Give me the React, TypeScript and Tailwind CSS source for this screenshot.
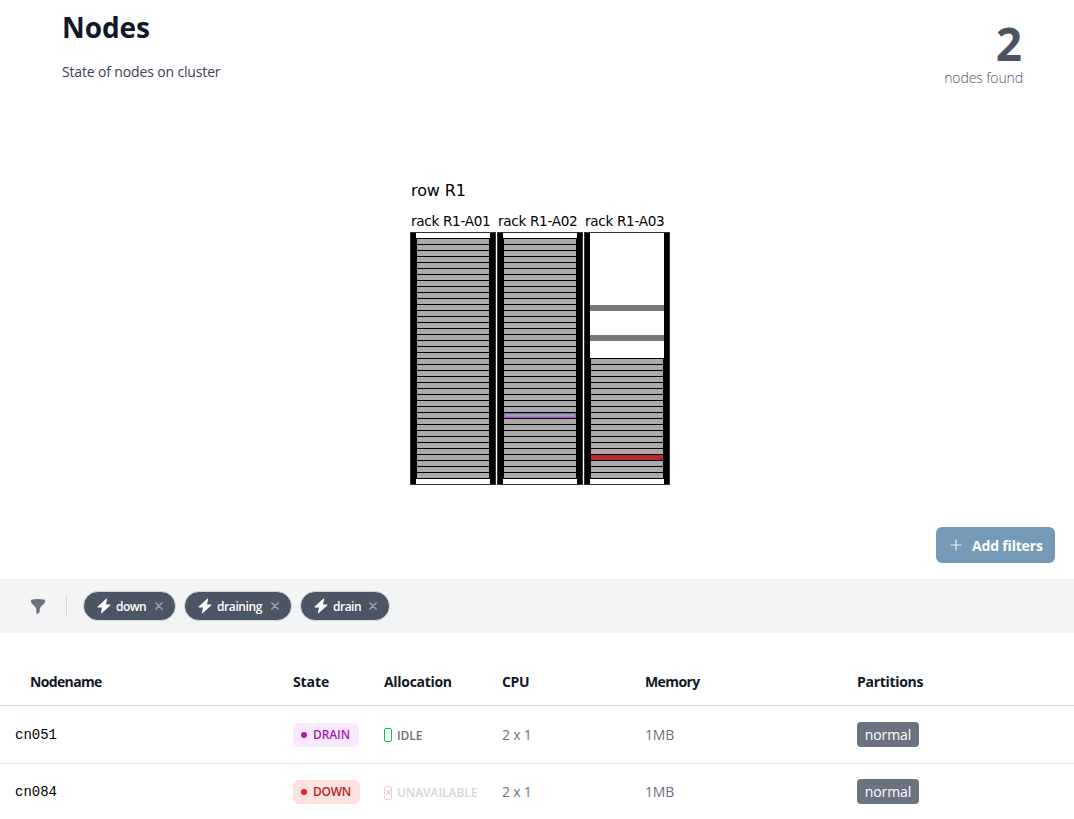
import type { ReactNode } from 'react'

const SLOT = 6

type Mark = { row: number; kind: 'drain' | 'down' }

function Rack({ nodes, marks = [], equipment = [] }: { nodes: number; marks?: Mark[]; equipment?: number[] }) {
  const first = 40 - nodes
  return (
    <svg width="86" height="253" viewBox="0 0 86 253" shapeRendering="crispEdges" className="block">
      <rect width="86" height="253" fill="#333333" />
      <rect x="1" y="1" width="84" height="251" fill="#000000" />
      <rect x="6" y="1" width="74" height="251" fill="#ffffff" />
      {equipment.map((y) => (
        <rect key={y} x="6" y={y} width="74" height="6" fill="#777777" />
      ))}
      <rect x="6" y={6 + first * SLOT} width="74" height={nodes * SLOT + 1} fill="#000000" />
      {Array.from({ length: nodes }, (_, i) => {
        const row = first + i
        const y = 7 + row * SLOT
        const mark = marks.find((m) => m.row === row)
        if (mark?.kind === 'drain') {
          return (
            <g key={row}>
              <rect x="7" y={y} width="72" height="5" fill="#b055d0" />
              <rect x="8" y={y + 1} width="70" height="3" fill="#a58bad" />
              <rect x="9" y={y + 2} width="68" height="1" fill="#74c98d" />
            </g>
          )
        }
        return <rect key={row} x="7" y={y} width="72" height="5" fill={mark ? '#b92a2a' : '#aaaaaa'} />
      })}
    </svg>
  )
}

function Chip({ label, width, tracking }: { label: string; width: string; tracking: string }) {
  return (
    <span
      className={`flex h-[30px] items-center rounded-full border border-gray-300 bg-[#4b5563] pl-[13px] text-[12px] font-semibold text-white ${width}`}
    >
      <svg width="14" height="16" viewBox="0 0 14 16" className="mr-[5px] shrink-0">
        <path d="M9.2.8.8 8.6c-.4.4-.2.8.3.8H5L4 14.7c-.1.6.5.8.9.4l8.3-7.7c.4-.4.2-.8-.3-.8H9l1.1-5.3c.1-.6-.5-.9-.9-.5Z" fill="white" />
      </svg>
      <span className={`pt-px ${tracking}`}>{label}</span>
      <svg width="8" height="8" viewBox="0 0 8 8" stroke="#9ca3af" strokeWidth="1.5" strokeLinecap="round" className="ml-auto mr-[12px] shrink-0">
        <path d="m.8.8 6.4 6.4M7.2.8.8 7.2" />
      </svg>
    </span>
  )
}

const COLUMNS = 'grid grid-cols-[293px_91px_118px_143px_212px_1fr] items-center'

function Row({ name, state, allocation, last }: { name: string; state: ReactNode; allocation: ReactNode; last?: boolean }) {
  return (
    <div className={`${COLUMNS} text-[14px] text-gray-500 ${last ? 'h-[55px]' : 'h-[58px] border-b border-gray-200'}`}>
      <span className="pl-[15px] pt-[2px] font-['Liberation_Mono',monospace] text-[14px] text-black">{name}</span>
      {state}
      {allocation}
      <span className="pb-px tracking-[-0.2px]">2 x 1</span>
      <span className="pb-px tracking-[-0.2px]">1MB</span>
      <span className="flex h-[25px] w-[62px] items-center justify-center rounded bg-[#6b7280] text-[14px] font-medium tracking-[-0.1px] text-white">
        normal
      </span>
    </div>
  )
}

export default function App() {
  return (
    <main className="flex h-[819px] w-[1074px] flex-col overflow-hidden bg-white font-['Open_Sans','Noto_Sans',sans-serif]">
      <header className="flex h-[181px] shrink-0 justify-between pl-[62px] pr-[51px]">
        <div className="pt-[9px]">
          <h1 className="text-[28px] font-bold leading-9 tracking-[-0.1px] text-[#111827]">Nodes</h1>
          <p className="mt-[17px] text-[14px] leading-5 tracking-[-0.15px] text-[#374151]">State of nodes on cluster</p>
        </div>
        <div className="pt-[20px] text-right">
          <div className="pr-px text-[46px] font-bold leading-[46px] text-[#4b5563]">2</div>
          <div className="mt-[2px] text-[14px] font-light leading-5 tracking-[-0.1px] text-[#4b5563]">nodes found</div>
        </div>
      </header>

      <section className="flex h-[346px] shrink-0 flex-col pl-[410px] font-['DejaVu_Sans',sans-serif] text-black">
        <div className="h-[30px] pl-px text-[16px] leading-5 tracking-[-0.1px]">row R1</div>
        <div className="flex h-[21px] gap-px text-[13.6px] leading-5 tracking-[-0.32px]">
          <div className="w-[86px] whitespace-nowrap pl-px">rack R1-A01</div>
          <div className="w-[86px] whitespace-nowrap pl-px">rack R1-A02</div>
          <div className="w-[86px] whitespace-nowrap pl-px">rack R1-A03</div>
        </div>
        <div className="flex gap-px">
          <Rack nodes={40} />
          <Rack nodes={40} marks={[{ row: 29, kind: 'drain' }]} />
          <Rack nodes={20} marks={[{ row: 36, kind: 'down' }]} equipment={[73, 103]} />
        </div>
      </section>

      <div className="flex h-[52px] shrink-0 justify-end pr-[19px]">
        <button className="flex h-[36px] w-[119px] items-center rounded-md bg-[#759ab7] pl-[14px] text-[14px] font-bold text-white">
          <svg width="12" height="12" viewBox="0 0 12 12" stroke="white" strokeOpacity=".85" strokeWidth="1.2" className="mr-[10px] shrink-0">
            <path d="M6 .5v11M.5 6h11" />
          </svg>
          <span className="whitespace-nowrap pt-px tracking-[-0.18px]">Add filters</span>
        </button>
      </div>

      <section className="flex h-[54px] shrink-0 items-center bg-[#f3f4f6] pl-[31px]">
        <svg width="14" height="15" viewBox="0 0 14 15">
          <path d="M.3.8C2.400.3 4.600 0 7 0s4.600.3 6.700.8c.2.1.3.3.3.6v1c0 .8-.3 1.500-.9 2.100L9.300 8.400c-.4.4-.6.9-.6 1.500v2.600c0 .6-.3 1.100-.8 1.400l-1.300.8c-.6.3-1.300-.1-1.300-.7V9.900c0-.6-.2-1.100-.6-1.500L.9 4.500C.3 3.900 0 3.200 0 2.400v-1C0 1.100.1.900.3.8Z" fill="#6b7280" />
        </svg>
        <span className="ml-[21px] mr-[16px] h-5 w-px bg-gray-300" />
        <div className="flex gap-[8px]">
          <Chip label="down" width="w-[93px]" tracking="tracking-[-0.55px]" />
          <Chip label="draining" width="w-[108px]" tracking="tracking-[-0.4px]" />
          <Chip label="drain" width="w-[90px]" tracking="tracking-[-0.5px]" />
        </div>
      </section>

      <section className="shrink-0 pt-[25px]">
        <div className={`${COLUMNS} h-[48px] border-b border-gray-300 text-[14px] font-bold tracking-[-0.3px] text-[#111827]`}>
          <span className="pl-[30px] tracking-[-0.65px]">Nodename</span>
          <span className="tracking-[-0.1px]">State</span>
          <span>Allocation</span>
          <span>CPU</span>
          <span className="tracking-[-0.6px]">Memory</span>
          <span>Partitions</span>
        </div>
        <Row
          name="cn051"
          state={
            <span className="flex h-6 w-[66px] items-center rounded-md bg-[#fae8ff] pl-2 text-[12px] font-semibold tracking-[-0.1px] text-[#a21caf]">
              <span className="mr-[6px] size-1.5 rounded-full bg-[#a21caf]" />
              DRAIN
            </span>
          }
          allocation={
            <span className="flex items-center pt-px text-[12px] font-semibold tracking-[-0.1px]">
              <span className="mr-[5px] h-[14px] w-2 rounded-[2px] border border-green-500" />
              <span className="pt-px">IDLE</span>
            </span>
          }
        />
        <Row
          last
          name="cn084"
          state={
            <span className="flex h-6 w-[67px] items-center rounded-md bg-[#fee2e2] pl-2 text-[12px] font-semibold tracking-[-0.3px] text-[#b91c1c]">
              <span className="mr-[6px] size-1.5 rounded-full bg-[#dc2626]" />
              <span className="pt-px">DOWN</span>
            </span>
          }
          allocation={
            <span className="flex items-center pt-[2px] text-[12px] font-semibold tracking-[-0.05px] text-[#d1d5db]">
              <span className="mr-[5px] flex h-[14px] w-2 items-center justify-center rounded-[2px] border border-red-200">
                <svg width="5" height="5" viewBox="0 0 5 5" stroke="#9ca3af" strokeWidth=".8" className="shrink-0">
                  <path d="m.3.3 4.400 4.400M4.700.3.3 4.700" />
                </svg>
              </span>
              <span>UNAVAILABLE</span>
            </span>
          }
        />
      </section>
    </main>
  )
}
